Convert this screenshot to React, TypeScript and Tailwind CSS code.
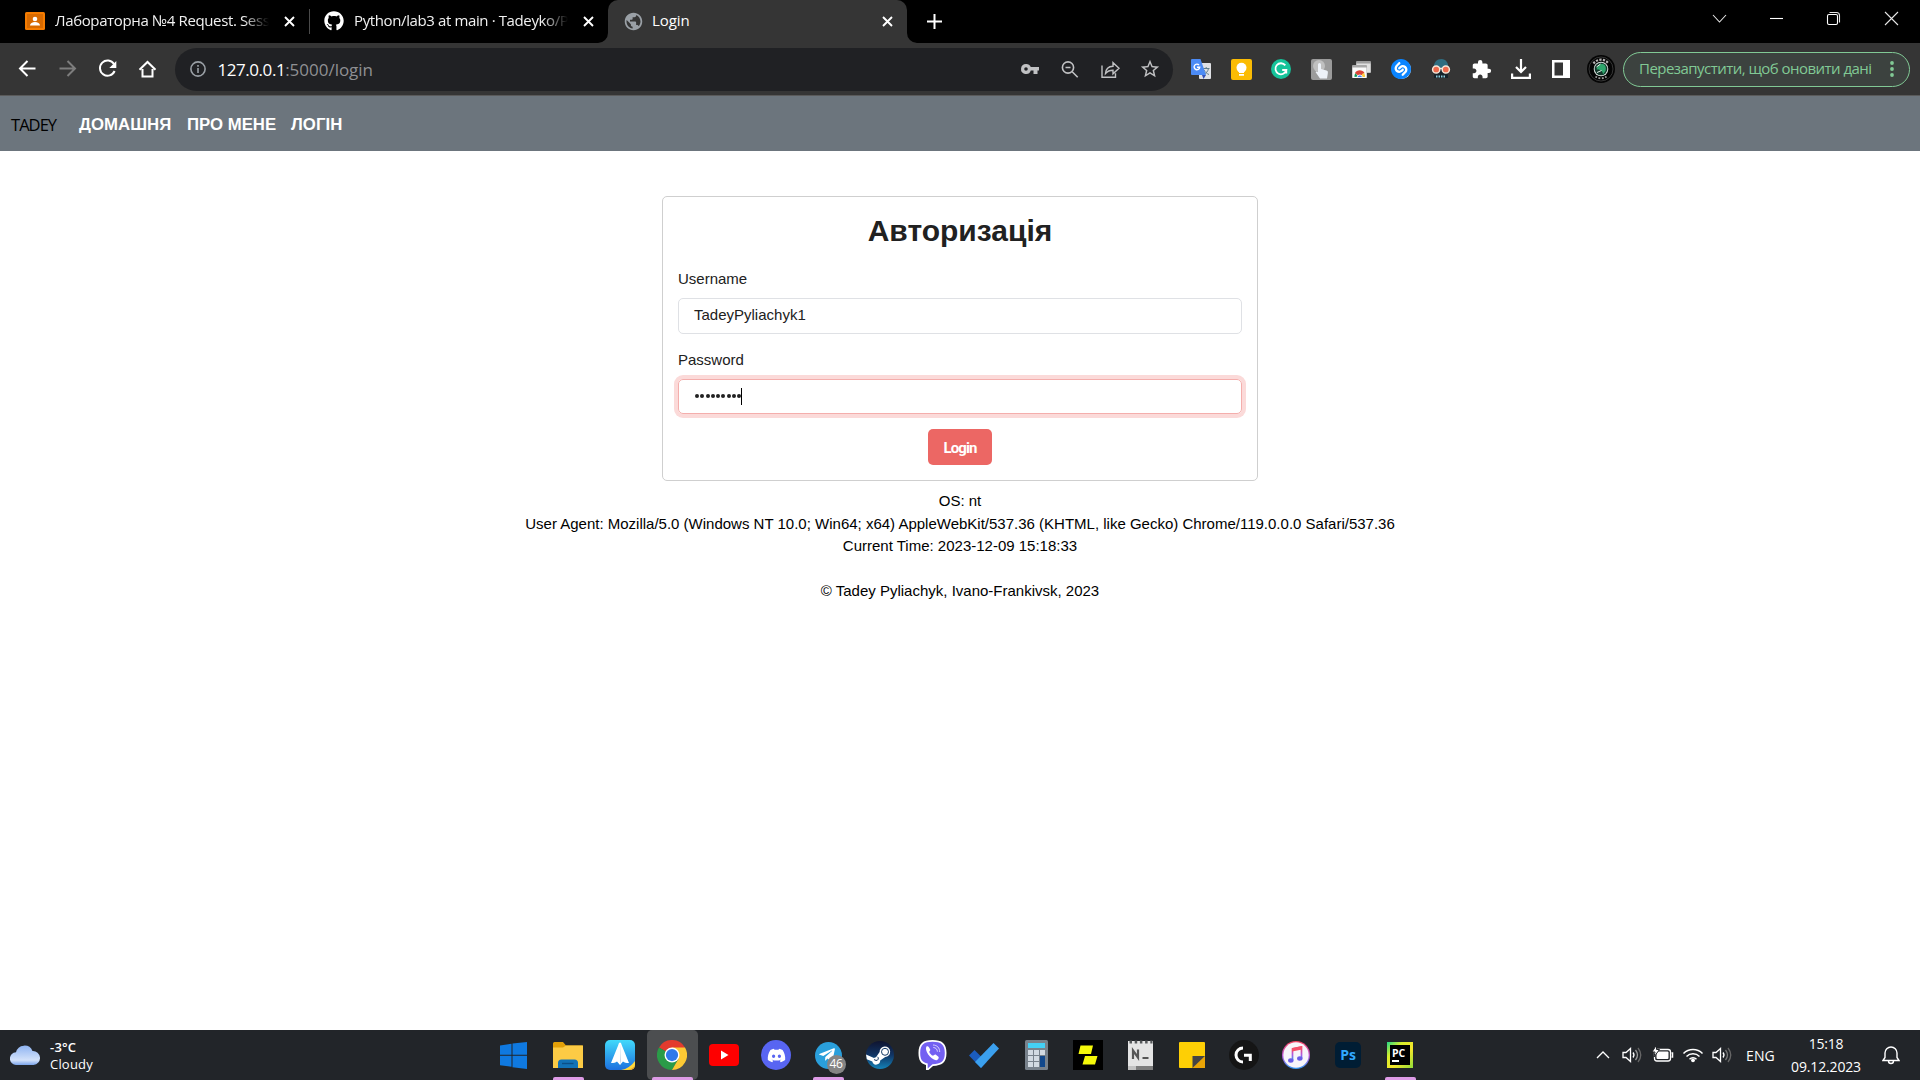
import React, { type ReactNode } from "react";
import { FaGithub, FaDiscord, FaSteam, FaTelegramPlane } from "react-icons/fa";
import { MdStarBorder, MdExtension, MdPublic } from "react-icons/md";
import { SiShazam } from "react-icons/si";

function CloseX({ className = "" }: { className?: string }) {
  return (
    <svg className={"size-[11px] shrink-0 " + className} viewBox="0 0 11 11" stroke="#fff" strokeWidth="1.9">
      <path d="M1 1l9 9M10 1l-9 9" />
    </svg>
  );
}

function TabStrip() {
  return (
    <div className="flex h-[43px] bg-black text-[15px] text-[#f1f1f1]">
      <div className="flex h-[42px] w-[309px] items-center pl-[25px]">
        <svg className="h-[18px] w-5 shrink-0" viewBox="0 0 20 18">
          <rect width="20" height="18" rx="1.5" fill="#f57c00" />
          <rect x="2" y="2" width="16" height="14" fill="#d86a00" />
          <circle cx="10" cy="7" r="2.3" fill="#fff" />
          <path d="M5 13.6c0-2.4 2.4-3.6 5-3.6s5 1.2 5 3.6z" fill="#fff" />
        </svg>
        <span className="ml-[10px] w-[214px] shrink-0 overflow-hidden whitespace-nowrap pb-[2px] tracking-[-0.37px] [mask-image:linear-gradient(to_right,black_88%,transparent)]">
          Лабораторна №4 Request. Sess
        </span>
        <CloseX className="ml-[15px]" />
      </div>
      <div className="mt-[9px] h-[25px] w-px bg-[#4a4a4a]" />
      <div className="flex h-[42px] w-[288px] items-center pl-[14px]">
        <FaGithub className="size-5 shrink-0 text-white" />
        <span className="ml-[10px] w-[214px] shrink-0 overflow-hidden whitespace-nowrap pb-[2px] tracking-[-0.38px] [mask-image:linear-gradient(to_right,black_88%,transparent)]">
          Python/lab3 at main · Tadeyko/P
        </span>
        <CloseX className="ml-[15px]" />
      </div>
      <svg className="mt-[33px] size-[10px] shrink-0" viewBox="0 0 10 10"><path d="M10 0v10H0A10 10 0 0 0 10 0z" fill="#353535" /></svg>
      <div className="flex h-[43px] w-[299px] items-center rounded-t-[10px] bg-[#353535] pb-px pl-[15px]">
        <MdPublic className="size-[21px] shrink-0 text-[#9aa0a6]" />
        <span className="ml-[8px] w-[226px] pb-[2px] tracking-[-0.1px] text-white">Login</span>
        <CloseX className="ml-[4px]" />
      </div>
      <svg className="mt-[33px] size-[10px] shrink-0" viewBox="0 0 10 10"><path d="M0 0v10h10A10 10 0 0 1 0 0z" fill="#353535" /></svg>
      <svg className="ml-[10px] mt-[14px] size-[15px]" viewBox="0 0 15 15" stroke="#fff" strokeWidth="2"><path d="M7.5 0v15M0 7.5h15" /></svg>
      <svg className="ml-auto h-[36px] w-[220px] shrink-0" viewBox="1700 0 220 36" fill="none" stroke="#e6e6e6" strokeWidth="1.1">
        <path d="M1713 15l6.5 7 6.5-7" />
        <path d="M1770 18.5h13" stroke="#fff" />
        <rect x="1827.5" y="14.5" width="10" height="10" rx="1.5" stroke="#fff" />
        <path d="M1829.5 12.5h7a3 3 0 0 1 3 3v7" />
        <path d="M1885 12l13 13M1898 12l-13 13" />
      </svg>
    </div>
  );
}

function Ext({ children }: { children: ReactNode }) {
  return <div className="flex w-10 shrink-0 items-center justify-center">{children}</div>;
}

function Extensions() {
  return (
    <>
      <Ext>
        <svg className="size-5" viewBox="0 0 20 20">
          <rect x="8" y="4" width="12" height="16" rx="1" fill="#dfe1e5" />
          <path d="M12 9.5h6.5M15.2 8v1.5M17.5 9.5c-.6 3-2.5 5-5 6M13 11c1 2 3 3.8 5 4.5" stroke="#607d8b" strokeWidth="1" fill="none" />
          <path d="M11 16h4l-2.500 4z" fill="#3450b5" />
          <path d="M1 0h8.500L15 16H1a1 1 0 0 1-1-1V1a1 1 0 0 1 1-1z" fill="#4c8bf5" />
          <path d="M8 6A2.8 2.8 0 1 0 8.700 8.300H6" stroke="#fff" strokeWidth="1.4" fill="none" />
        </svg>
      </Ext>
      <Ext>
        <svg className="size-[21px]" viewBox="0 0 21 21">
          <rect width="21" height="21" rx="2" fill="#fbbc04" />
          <circle cx="10.5" cy="8.700" r="5" fill="#fff" />
          <path d="M8 11h5v3H8zM8 15h5v1.800H8z" fill="#fff" />
        </svg>
      </Ext>
      <Ext>
        <svg className="size-5" viewBox="0 0 20 20" fill="none" stroke="#fff" strokeWidth="1.8">
          <circle cx="10" cy="10" r="10" fill="#15c39a" stroke="none" />
          <path d="M14.3 6.4A5.5 5.5 0 1 0 15.300 11H11.200M15.300 10.500v4" />
        </svg>
      </Ext>
      <Ext>
        <svg className="size-[21px]" viewBox="0 0 21 21">
          <rect width="21" height="21" rx="2" fill="#9b9b9b" />
          <circle cx="8" cy="7" r="6" fill="#c0c0c0" />
          <path d="M7 5.5a1.5 1.5 0 0 1 3 0V10l5.500 1.500c1.500.4 1.500 1.500 1.300 3L16 19.500H9L4.500 13c1-1 2-.5 2.500.3z" fill="#eef2f8" />
        </svg>
      </Ext>
      <Ext>
        <svg className="h-[17px] w-[19px]" viewBox="0 0 19 17">
          <rect x="4" y="0" width="15" height="12" rx="1" fill="#9e9e9e" />
          <rect x="4.5" y="2.5" width="14" height="9" fill="#e0e0e0" />
          <rect x="0" y="4" width="15" height="13" rx="1" fill="#a8a8a8" />
          <rect x=".5" y="6.5" width="14" height="10.5" fill="#fafafa" />
          <path d="M2.500 16a5 5 0 0 1 1-4L6 15.500z" fill="#0f9d58" />
          <path d="M3 12a5.500 5.500 0 0 1 9.500 0l-2.500 2H5.500z" fill="#db4437" />
          <path d="M12 12a5 5 0 0 1 1 4H9.500l.5-3z" fill="#ffcd40" />
          <path d="M5.200 16.500a2.600 2.600 0 0 1 5.200 0z" fill="#4285f4" stroke="#fff" strokeWidth=".8" />
        </svg>
      </Ext>
      <Ext>
        <span className="flex size-[19px] items-center justify-center rounded-full bg-white"><SiShazam className="size-5 shrink-0 text-[#0a84ff]" /></span>
      </Ext>
      <Ext>
        <svg className="size-[20px]" viewBox="0 0 20 20">
          <path d="M2.500 9.500C2.500 3 6 0 10.500 0s7 4 7 9.500z" fill="#2f6d80" />
          <path d="M3 10h14v9H3z" fill="#17222a" />
          <path d="M5 17.500h10" stroke="#8fd0e0" strokeWidth="2" strokeDasharray="1.5 1" />
          <circle cx="5.200" cy="10.500" r="3.600" fill="#ef6a4c" stroke="#f5e6d8" strokeWidth="1.5" />
          <circle cx="14.800" cy="10.500" r="3.600" fill="#ef6a4c" stroke="#f5e6d8" strokeWidth="1.5" />
          <path d="M8.500 9.500h3" stroke="#f5e6d8" strokeWidth="1.5" />
        </svg>
      </Ext>
      <Ext><MdExtension className="size-[21px] text-white" /></Ext>
      <Ext>
        <svg className="size-5" viewBox="0 0 20 20" fill="none" stroke="#fff" strokeWidth="2.2">
          <path d="M10 0v13M5 8l5 5 5-5M1.100 14.500v4.300h17.800v-4.300" />
        </svg>
      </Ext>
      <Ext>
        <svg className="h-[18px] w-[18px]" viewBox="0 0 18 18"><path d="M0 0h18v18H0zM2.500 2.500v13h8.500v-13z" fill="#fff" fillRule="evenodd" /></svg>
      </Ext>
      <Ext>
        <svg className="size-7" viewBox="0 0 28 28">
          <circle cx="14" cy="14" r="14" fill="#050505" />
          <circle cx="14" cy="14" r="12" fill="none" stroke="#555" strokeWidth=".6" />
          <path d="M6.500 8.500A9.300 9.300 0 0 1 21.500 8.500" fill="none" stroke="#b5b5b5" strokeWidth="2.200" strokeDasharray="2.200 1.300" />
          <path d="M8.500 21.500A9.300 9.300 0 0 0 19.500 21.500" fill="none" stroke="#999" strokeWidth="1.800" strokeDasharray="1.800 1.500" />
          <circle cx="14" cy="14" r="7.300" fill="#d5dcd9" />
          <circle cx="14" cy="14" r="6.300" fill="#12372a" />
          <path d="M9.500 14.500c.5-4 3-6 6-5.500 3 .5 4 3.500 3 7l-2.500 3.500c0-3-2.500-5.500-6.500-5z" fill="#2fa56c" />
          <path d="M9.500 12l4-3M10 17.500l4.500-2" stroke="#e4efe9" strokeWidth="1" />
        </svg>
      </Ext>
    </>
  );
}

function Toolbar() {
  return (
    <div className="flex h-[53px] items-center border-b border-[#5a5a5a] bg-[#353535]">
      <svg className="h-[52px] w-[175px] shrink-0" viewBox="0 43 175 52" fill="none" stroke="#fff" strokeWidth="2">
        <path d="M35.500 68.500H20.500M27.500 61l-7.500 7.500 7.500 7.500" />
        <path d="M59.500 68.500h15M67.500 61l7.500 7.500-7.500 7.500" stroke="#7d7d7d" />
        <path d="M114 64a7.600 7.600 0 1 0 .6 7" />
        <path d="M116.300 61v7h-7z" fill="#fff" stroke="none" />
        <path d="M142.500 69v7.500h10V69M139.500 69.700l8-7.700 8 7.700" />
      </svg>
      <div className="flex h-[43px] w-[998px] shrink-0 items-center rounded-full bg-[#202124] pl-[14.5px]">
        <svg className="size-4 shrink-0" viewBox="0 0 16 16" fill="none" stroke="#9aa0a6" strokeWidth="1.6">
          <circle cx="8" cy="8" r="7.100" /><path d="M8 7v5M8 4v1.700" />
        </svg>
        <div className="ml-[12px] flex whitespace-nowrap text-[17px] leading-none">
          <span className="tracking-[-0.45px] text-white">127.0.0.1</span>
          <span className="tracking-[-0.02px] text-[#8f9093]">:5000/login</span>
        </div>
        <svg className="ml-auto h-[43px] w-[153px] shrink-0" viewBox="1020 48 153 43" fill="none" stroke="#c0c1c3" strokeWidth="1.6">
          <path d="M1026 64a5 5 0 1 0 4.800 6.500h2.700v3.500h4v-3.500h1.500v-3.500h-8.200a5 5 0 0 0-4.800-3zm0 3.200a1.800 1.800 0 1 1 0 3.600 1.800 1.800 0 0 1 0-3.600z" fill="#c0c1c3" stroke="none" fillRule="evenodd" />
          <circle cx="1068" cy="67.500" r="5.600" /><path d="M1072.200 71.800l5.500 5.500M1065.500 67.500h5" />
          <path d="M1102 65.500V77.300h13.500v-4M1105.500 73.500c.3-4.500 3-7 7.500-7.200v-3.600l6 5.600-6 5.500v-3.500c-3.500 0-5.500.8-7.500 3.200z" strokeWidth="1.4" />
        </svg>
        <MdStarBorder className="ml-[-34px] mr-[12px] size-[22px] shrink-0 text-[#c0c1c3]" />
      </div>
      <div className="ml-[8px] flex w-[440px] shrink-0"><Extensions /></div>
      <div className="ml-[2px] flex h-[35px] w-[287px] items-center rounded-full border border-[#81c995] bg-[#3c423f] pl-[15px] text-[15px] text-[#81c995]">
        <span className="w-[251px] whitespace-nowrap pb-[2px] tracking-[-0.54px]">Перезапустити, щоб оновити дані</span>
        <svg className="h-4 w-1 shrink-0" viewBox="0 0 4 16" fill="#81c995"><circle cx="2" cy="2" r="1.9" /><circle cx="2" cy="8" r="1.9" /><circle cx="2" cy="14" r="1.9" /></svg>
      </div>
    </div>
  );
}

function Page() {
  return (
    <main className="flex h-[934px] flex-col bg-white font-['Liberation_Sans',Arial,sans-serif] text-[15px] leading-[22.5px] text-black">
      <nav className="flex h-[55px] items-center bg-[#6c757d] pl-[11px] pt-[3px] text-[16.75px] font-bold text-white">
        <span className="w-[68px] font-['Open_Sans',sans-serif] text-[16.5px] font-normal tracking-[-0.95px] text-black">TADEY</span>
        <span className="w-[108px] tracking-[0.05px]">ДОМАШНЯ</span>
        <span className="w-[104px]">ПРО МЕНЕ</span>
        <span className="tracking-[0.1px]">ЛОГІН</span>
      </nav>
      <form className="mx-auto mt-[45px] flex h-[285px] w-[596px] flex-col rounded-[5px] border border-[#cfcfcf] px-[15px] text-[#212121]">
        <h1 className="mt-[16px] text-center text-[30px] font-bold leading-[36px]">Авторизація</h1>
        <label className="mt-[19px]">Username</label>
        <div className="mt-[7px] h-[36px] rounded-[5px] border border-[#dfe1e5] pl-[15px] pt-[5px]">TadeyPyliachyk1</div>
        <label className="mt-[15px]">Password</label>
        <div className="mt-[8px] flex h-[35px] items-center rounded-[5px] border border-[#f4aeac] pl-[16px] ring-4 ring-[#fbdad9]">
          {Array.from({ length: 9 }, (_, i) => (
            <span key={i} className="mb-px mr-[1.25px] size-[4px] rounded-full bg-[#212121]" />
          ))}
          <span className="-ml-[1.5px] h-[17px] w-px bg-black" />
        </div>
        <button type="button" className="mx-auto mt-[15px] h-[36px] w-[64px] rounded-[5px] bg-[#ec6764] pt-[2px] font-['Roboto',sans-serif] text-[15px] font-bold tracking-[-0.9px] text-white">
          Login
        </button>
      </form>
      <footer className="mt-[9px] text-center">
        <p>OS: nt</p>
        <p>User Agent: Mozilla/5.0 (Windows NT 10.0; Win64; x64) AppleWebKit/537.36 (KHTML, like Gecko) Chrome/119.0.0.0 Safari/537.36</p>
        <p>Current Time: 2023-12-09 15:18:33</p>
        <p className="mt-[22px]">© Tadey Pyliachyk, Ivano-Frankivsk, 2023</p>
      </footer>
    </main>
  );
}

function TaskItem({ children, line = "", active = false }: { children: ReactNode; line?: string; active?: boolean }) {
  return (
    <div className="relative flex h-[50px] w-[52px] shrink-0 items-center justify-center">
      {active && <span className="absolute inset-x-[0.5px] inset-y-0 rounded-[5px] bg-[#4c4e50]" />}
      <span className="relative flex">{children}</span>
      {line && <span className={"absolute bottom-0 h-[3px] rounded-t-[2px] bg-[#dd9be6] " + line} />}
    </div>
  );
}

function TaskbarApps() {
  return (
    <>
      <div className="-ml-px mr-[3px] flex">
        <TaskItem>
          <svg className="size-[27px]" viewBox="0 0 27 27" fill="#0f79e0"><path d="M0 3.500l11.500-1.700V12.700H0zM12.500 1.600L27 0v12.700H12.500zM0 13.800h11.500v11L0 23.300zM12.500 13.800H27V27l-14.500-1.800z" /></svg>
        </TaskItem>
      </div>
      <TaskItem line="w-[31px]">
        <svg className="h-[26px] w-[30px]" viewBox="0 0 30 26">
          <path d="M0 1.500A1.500 1.500 0 0 1 1.500 0H10l3 3.500h16a1 1 0 0 1 1 1V9H0z" fill="#e3a008" />
          <path d="M0 5.500h10l3-2h17V26H0z" fill="#fccb45" />
          <path d="M5 26v-5a3.500 3.500 0 0 1 3.500-3.500h13A3.500 3.500 0 0 1 25 21v5z" fill="#1272b6" />
          <path d="M9 21.500h11.500" stroke="#0b4f87" strokeWidth="1.4" />
        </svg>
      </TaskItem>
      <TaskItem>
        <svg className="size-[30px]" viewBox="0 0 30 30">
          <defs>
            <linearGradient id="sky" x1="0" y1="0" x2="0" y2="1"><stop stopColor="#41d9fb" /><stop offset="1" stopColor="#1c70df" /></linearGradient>
            <clipPath id="skyClip"><rect width="30" height="30" rx="5" /></clipPath>
          </defs>
          <g clipPath="url(#skyClip)">
            <rect width="30" height="30" fill="url(#sky)" />
            <path d="M16 30c6-1 10-4 14-9v9z" fill="#ffd83a" /><path d="M22 30c3-.5 6-2 8-4.500V30z" fill="#f3aa1c" />
            <path d="M15 2.500c1 0 1.300 1 1.700 2.500l7.300 18c-3 0-4.500-.5-6-1.500L15 25l-3-3.500c-1.500 1-3 1.500-6 1.500l7.300-18c.4-1.500.7-2.500 1.700-2.500z" fill="#fff" />
            <path d="M15 4l1 17-1 4z" fill="#c9d8e8" />
          </g>
        </svg>
      </TaskItem>
      <TaskItem active line="w-[41px]">
        <svg className="size-[30px]" viewBox="0 0 48 48">
          <path d="M24 24L3.200 12A24 24 0 0 1 44.800 12z" fill="#e33b2e" />
          <path d="M24 24l10.400 6L24 48A24 24 0 0 1 3.200 12z" fill="#2a9b48" />
          <path d="M24 12h20.800A24 24 0 0 1 24 48l10.400-18z" fill="#fcc934" />
          <circle cx="24" cy="24" r="12" fill="#fff" /><circle cx="24" cy="24" r="9.800" fill="#2f79ea" />
        </svg>
      </TaskItem>
      <TaskItem>
        <svg className="h-[22px] w-[30px]" viewBox="0 0 30 22"><rect width="30" height="22" rx="4" fill="#fe0000" /><path d="M12 6.500v9l7.500-4.500z" fill="#fff" /></svg>
      </TaskItem>
      <TaskItem>
        <span className="flex size-[30px] items-center justify-center rounded-full bg-[#5865f2]"><FaDiscord className="size-[19px] text-white" /></span>
      </TaskItem>
      <TaskItem line="w-[31px]">
        <span className="flex size-[27px] items-center justify-center rounded-full bg-[#2a9fdb]"><FaTelegramPlane className="mr-[2px] size-[18px] text-white" /></span>
        <span className="absolute -right-[4px] top-[13px] flex size-[19px] items-center justify-center rounded-full bg-[#858585] text-[12px] leading-none tracking-[-0.3px] text-white">46</span>
      </TaskItem>
      <TaskItem>
        <svg className="size-[28px]" viewBox="0 0 28 28">
          <defs>
            <linearGradient id="steam" x1="0" y1="0" x2="0" y2="1"><stop stopColor="#10142f" /><stop offset=".5" stopColor="#103464" /><stop offset="1" stopColor="#1483b8" /></linearGradient>
          </defs>
          <circle cx="14" cy="14" r="14" fill="url(#steam)" />
          <path d="M0 13.500l8 3.400a4 4 0 0 1 2-.7l3.600-5.200a5.300 5.300 0 1 1 5.600 5l-5 3.600a4 4 0 0 1-7.900.9L.8 18.300z" fill="#fff" />
          <circle cx="19" cy="10.800" r="3.500" fill="none" stroke="#123763" strokeWidth="1" />
          <path d="M8 18.600l2 .8a2 2 0 0 0 1.500-3.600" fill="none" stroke="#123763" strokeWidth="1" />
        </svg>
      </TaskItem>
      <TaskItem>
        <svg className="h-[30px] w-[29px]" viewBox="0 0 29 30">
          <path d="M14.500 0C24 0 28.500 3.500 28.500 13S24 25.500 15 26l-4.500 4H8v-5C2.500 23.500.5 20 .5 13 .5 3.500 5 0 14.500 0z" fill="#fff" />
          <path d="M14.500 1.700C23 1.700 26.800 4.500 26.800 13S23 24 14.500 24.300L9.700 28.500V23.600C4 22.500 2.200 19 2.200 13 2.200 4.500 6 1.700 14.500 1.700z" fill="#7360f2" />
          <path d="M8.500 6.500c1-.7 1.800-.3 2.400.7l1.200 2c.5 1-.2 1.500-.8 2.200-.5.700 2.500 4.600 4 4.200.8-.4 1.300-1.500 2.300-1l2.500 1.800c1.800 1.300-.7 3.800-2.100 3.800C12.500 19.500 6 10 8.500 6.500z" fill="#fff" />
          <path d="M15 5c4.200.2 6.700 2.800 6.700 7M15.300 7.500c2.600.2 4 1.700 4.100 4.200" stroke="#d8d2fb" fill="none" />
        </svg>
      </TaskItem>
      <TaskItem>
        <svg className="h-[25px] w-[30px]" viewBox="0 0 30 25"><path d="M5.500 7L0 12.500 12 25l5.500-6z" fill="#1b5cbe" /><path d="M24.500 0L30 5.500 12 25l-6-6z" fill="#3ba0ee" /></svg>
      </TaskItem>
      <TaskItem>
        <svg className="h-[30px] w-[23px]" viewBox="0 0 23 30">
          <rect width="23" height="30" rx="1.5" fill="#78828c" /><rect x="3" y="3" width="17" height="5" fill="#44d0f5" />
          <g fill="#d2dae2">{[10, 16, 22].map((y) => [3, 9, 15].map((x) => <rect key={x + "-" + y} x={x} y={y} width="5" height="5" />))}</g>
          <rect x="15" y="16" width="5" height="11" fill="#11488c" />
        </svg>
      </TaskItem>
      <TaskItem>
        <svg className="size-[30px]" viewBox="0 0 30 30"><rect width="30" height="30" fill="#000" /><path d="M7.500 5.500H20L18 14H5.500zM12 16h12.500l-2.500 8.500H9.500z" fill="#f4f80a" /></svg>
      </TaskItem>
      <TaskItem>
        <svg className="h-[30px] w-[25px]" viewBox="0 0 25 30">
          <rect y="1" width="25" height="25" fill="#e4e4e4" /><rect y="26" width="25" height="4" fill="#7d7d7d" /><rect y="26" width="8" height="4" fill="#c2c2c2" />
          <path d="M1.500 2h23" stroke="#55585a" strokeWidth="3" strokeDasharray="2.5 2.7" />
          <path d="M5 19V10.500l5 7V9.500M14.500 18h6" stroke="#555" strokeWidth="2.2" fill="none" />
        </svg>
      </TaskItem>
      <TaskItem>
        <svg className="size-[26px]" viewBox="0 0 26 26"><rect width="26" height="26" rx="1" fill="#fecf05" /><path d="M13 26L26 14v12z" fill="#e9a406" /><path d="M13.500 14H26L13.500 26z" fill="#444" /></svg>
      </TaskItem>
      <TaskItem>
        <svg className="size-[30px]" viewBox="0 0 30 30" fill="none" stroke="#fff" strokeWidth="3"><circle cx="15" cy="15" r="15" fill="#151515" stroke="none" /><path d="M14 8A7 7 0 1 0 14 22M15 15.300h6.300V21" /></svg>
      </TaskItem>
      <TaskItem>
        <svg className="size-[28px]" viewBox="0 0 28 28">
          <defs><linearGradient id="tune" x1="0" y1="0" x2="0" y2="1"><stop stopColor="#f9465f" /><stop offset=".55" stopColor="#b558dd" /><stop offset="1" stopColor="#2f9bf5" /></linearGradient></defs>
          <circle cx="14" cy="14" r="14" fill="url(#tune)" /><circle cx="14" cy="14" r="12.700" fill="#f7f5fa" />
          <path d="M10.500 19.500V8L19.500 6v11.500" fill="none" stroke="url(#tune)" strokeWidth="1.7" /><path d="M10 7l10-2v3.500L10 10.500z" fill="#f4506a" />
          <ellipse cx="8.800" cy="19.500" rx="2.700" ry="2.200" fill="#6a5ce8" /><ellipse cx="17.800" cy="17.500" rx="2.700" ry="2.200" fill="#6a5ce8" />
        </svg>
      </TaskItem>
      <TaskItem>
        <span className="flex size-[26px] items-center justify-center rounded-[5px] bg-[#001d34] text-[14px] font-bold leading-none tracking-[-0.2px] text-[#31a8ff]">Ps</span>
      </TaskItem>
      <TaskItem line="w-[31px]">
        <span className="flex size-[26px] items-center justify-center bg-[linear-gradient(135deg,#21d789,#d8ee2b_30%,#f4e62a_60%,#8fdc3a)]">
          <span className="flex size-[20px] flex-col items-start bg-black pl-[2px] pt-[3px] text-[10.5px] font-bold leading-[10px] text-white">
            PC
            <span className="mt-[2px] h-[2px] w-[7px] bg-white" />
          </span>
        </span>
      </TaskItem>
    </>
  );
}

function Taskbar() {
  return (
    <div className="flex h-[50px] items-center bg-[#222529] text-white">
      <div className="flex w-[488px] items-center pl-[10px]">
        <svg className="h-5 w-[30px]" viewBox="0 0 30 20">
          <defs><linearGradient id="cl" x1="0" y1="0" x2="0" y2="1"><stop stopColor="#8fb4f2" /><stop offset=".75" stopColor="#d3e2fa" /><stop offset="1" stopColor="#7ba4ea" /></linearGradient></defs>
          <path d="M6.500 20A6.300 6.300 0 0 1 6 7.300 8.700 8.700 0 0 1 22.500 6 7 7 0 0 1 23.500 20z" fill="url(#cl)" />
        </svg>
        <div className="ml-[10px] pt-px text-[13px] leading-[17px]">
          <div className="font-semibold tracking-[0.2px]">-3°C</div>
          <div className="tracking-[0.2px]">Cloudy</div>
        </div>
      </div>
      <TaskbarApps />
      <div className="ml-auto flex items-center text-[14px]">
        <svg className="h-[50px] w-[146px]" viewBox="1594 1030 146 50" fill="none" stroke="#fff" strokeWidth="1.3">
          <path d="M1597 1058l6-6 6 6" />
          {[1623, 1713].map((x) => (
            <g key={x}>
              <path d={`M${x} 1052.500h3l4.500-4v13l-4.500-4h-3z`} />
              <path d={`M${x + 10} 1052.500q2 2.500 0 5`} />
              <path d={`M${x + 12.5} 1050q4 5 0 10`} stroke={x > 1700 ? "#777" : "#999"} />
              <path d={`M${x + 15} 1048q5.500 7 0 14`} stroke="#666" />
            </g>
          ))}
          <rect x="1654.500" y="1049.500" width="16" height="11.500" rx="2.5" />
          <rect x="1656.500" y="1051.500" width="12" height="7.500" rx="1" fill="#fff" stroke="none" />
          <path d="M1671.500 1053h1v4h-1" strokeWidth="1.5" />
          <path d="M1656.500 1045l-4.500 7h3l-1 5 5.500-7.500h-3z" fill="#fff" stroke="#222529" strokeWidth="1" />
          <path d="M1683.500 1053.500a13.500 13.500 0 0 1 19 0M1686.500 1056.500a9.300 9.300 0 0 1 13 0M1689.500 1059.300a5 5 0 0 1 7 0" strokeWidth="1.5" />
          <circle cx="1693" cy="1060.300" r="1.9" fill="#fff" stroke="none" />
        </svg>
        <span className="ml-[6px] w-[43px] tracking-[0.1px]">ENG</span>
        <div className="w-[74px] text-center leading-[23px]">
          <div className="tracking-[-0.2px]">15:18</div>
          <div className="whitespace-nowrap tracking-[-0.15px]">09.12.2023</div>
        </div>
        <svg className="ml-[19px] mr-[20px] h-[19px] w-[18px]" viewBox="0 0 18 19" fill="none" stroke="#fff" strokeWidth="1.4">
          <path d="M1 14.500l2-3V7a6 6 0 0 1 12 0v4.500l2 3zM6.500 15a2.500 2.500 0 0 0 5 0" />
        </svg>
      </div>
    </div>
  );
}

export default function App() {
  return (
    <div className="flex h-[1080px] w-[1920px] flex-col overflow-hidden bg-white font-['Open_Sans','Noto_Sans',sans-serif]">
      <TabStrip />
      <Toolbar />
      <Page />
      <Taskbar />
    </div>
  );
}
